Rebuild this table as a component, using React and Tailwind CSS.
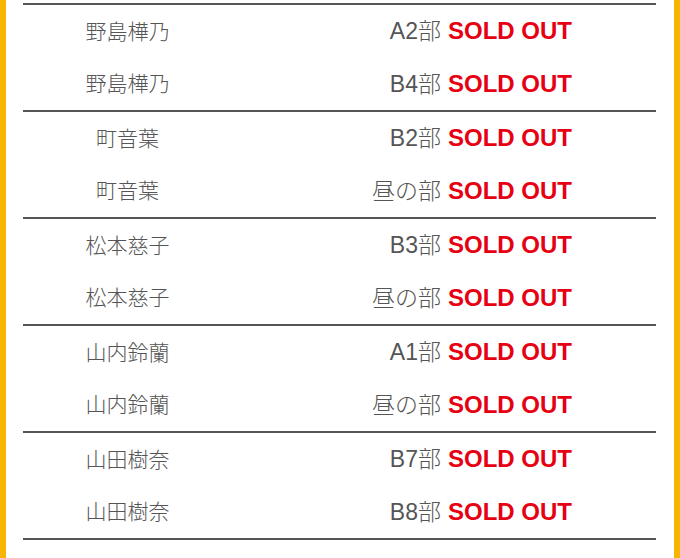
const SECTIONS = [
  { name: '野島樺乃', slots: ['A2部', 'B4部'] },
  { name: '町音葉', slots: ['B2部', '昼の部'] },
  { name: '松本慈子', slots: ['B3部', '昼の部'] },
  { name: '山内鈴蘭', slots: ['A1部', '昼の部'] },
  { name: '山田樹奈', slots: ['B7部', 'B8部'] },
];

function Row({ name, slot }) {
  return (
    <div className="grid grid-cols-[209px_1fr] items-center h-[52.5px]">
      <div className="text-center text-[21px] font-light text-[#555]">{name}</div>
      <div className="text-right pr-[84px] whitespace-nowrap">
        <span className="text-[23px] font-light text-[#555]">{slot}</span>
        <span className="ml-[7px] text-[24px] font-bold text-[#e60012]">SOLD OUT</span>
      </div>
    </div>
  );
}

export default function App() {
  return (
    <div
      className="h-[558px] overflow-hidden bg-white border-x-[6px] border-[#f8b500] pl-[17px] pr-[18px] pt-[3px]"
      style={{ fontFamily: '"Liberation Sans", "Noto Sans CJK JP", sans-serif' }}
    >
      <div className="border-t-2 border-[#555]">
        {SECTIONS.map(s => (
          <div key={s.name} className="border-b-2 border-[#555]">
            {s.slots.map(slot => (
              <Row key={slot} name={s.name} slot={slot} />
            ))}
          </div>
        ))}
      </div>
    </div>
  );
}
